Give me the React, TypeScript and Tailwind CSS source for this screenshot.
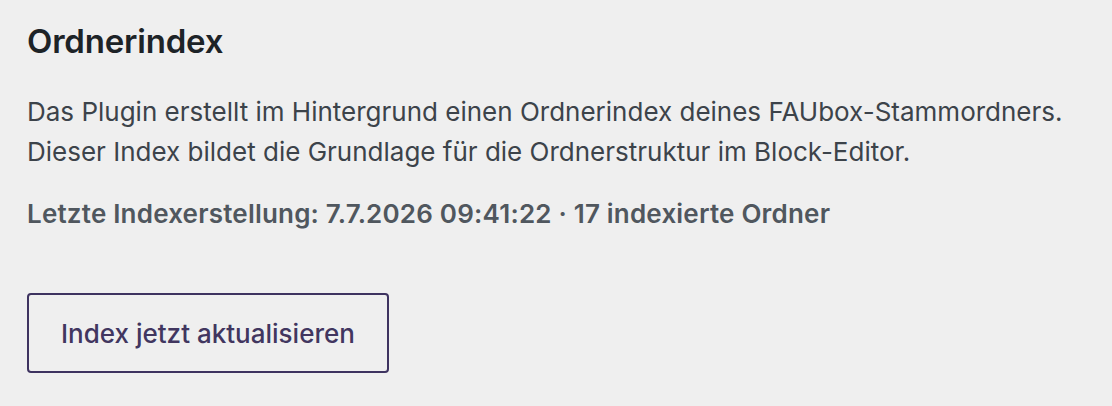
export default function App() {
    return (
        <div className="min-h-[406px] w-full bg-[#efefef] font-['Inter','Liberation_Sans',sans-serif]">
            <div className="px-[27px] pt-[21px]">
                <h2 className="text-[33px] leading-[40px] font-semibold text-[#1d2327] tracking-[-0.2px]">Ordnerindex</h2>

                <p className="mt-[31px] text-[26px] leading-[40px] text-[#3c434a]">
                    Das Plugin erstellt im Hintergrund einen Ordnerindex deines FAUbox-Stammordners.
                    <br />
                    Dieser Index bildet die Grundlage für die Ordnerstruktur im Block-Editor.
                </p>

                <p className="mt-[22px] text-[26px] leading-[40px] font-semibold tracking-[0.2px] text-[#50575e]">
                    Letzte Indexerstellung: 7.7.2026 09:41:22 · 17 indexierte Ordner
                </p>

                <div className="mt-[59px]">
                    <button className="h-[80px] px-[32px] rounded-[4px] border-2 border-[#3e3360] bg-transparent text-[26px] font-medium text-[#41365f]">
                        Index jetzt aktualisieren
                    </button>
                </div>
            </div>
        </div>
    );
}
